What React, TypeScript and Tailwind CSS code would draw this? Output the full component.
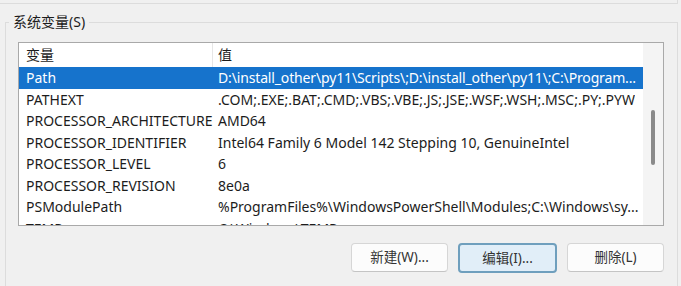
const rows: { name: string; value: string; selected?: boolean }[] = [
  {
    name: 'Path',
    value: 'D:\\install_other\\py11\\Scripts\\;D:\\install_other\\py11\\;C:\\Program...',
    selected: true,
  },
  { name: 'PATHEXT', value: '.COM;.EXE;.BAT;.CMD;.VBS;.VBE;.JS;.JSE;.WSF;.WSH;.MSC;.PY;.PYW' },
  { name: 'PROCESSOR_ARCHITECTURE', value: 'AMD64' },
  { name: 'PROCESSOR_IDENTIFIER', value: 'Intel64 Family 6 Model 142 Stepping 10, GenuineIntel' },
  { name: 'PROCESSOR_LEVEL', value: '6' },
  { name: 'PROCESSOR_REVISION', value: '8e0a' },
  { name: 'PSModulePath', value: '%ProgramFiles%\\WindowsPowerShell\\Modules;C:\\Windows\\sy...' },
  { name: 'TEMP', value: 'C:\\Windows\\TEMP' },
];

const font = { fontFamily: '"Noto Sans", "Noto Sans CJK SC", sans-serif' };

function Button({ label, focused }: { label: string; focused?: boolean }) {
  return (
    <button
      className={
        focused
          ? 'flex h-[30px] w-[99px] items-center justify-center rounded-[4px] border-2 border-[#6f9fbd] bg-[#e1eef8] text-[13.5px] text-[#333]'
          : 'flex h-[29px] w-[97px] items-center justify-center rounded-[4px] border border-[#d6d6d6] border-b-[#c4c4c4] bg-[#fcfcfc] text-[13.5px] text-[#333]'
      }
    >
      {label}
    </button>
  );
}

export default function App() {
  return (
    <div className="h-[286px] w-[681px] overflow-hidden bg-[#f0f0f0] text-[#1c1c1c]" style={font}>
      {/* bottom edge of the group above */}
      <div className="mr-[3px] h-[4px] border-b border-r border-[#dcdcdc]" />

      {/* System variables group */}
      <div className="relative ml-[5px] mr-[3px] mt-[18px] h-[300px] border-l border-r border-t border-[#dcdcdc]">
        <span className="absolute left-[3px] top-[-11px] bg-[#f0f0f0] px-[4px] text-[14px] leading-[20px]">
          系统变量(S)
        </span>

        <div className="ml-[12px] mt-[19px] flex h-[184px] w-[646px] border border-[#a9a9a9] bg-white">
          <div className="flex-1 overflow-hidden">
            <div className="flex h-[24px] items-end text-[14px]">
              <div className="w-[194px] border-r border-[#e6e6e6] pl-[7px] leading-[24px]">变量</div>
              <div className="pl-[5px] leading-[24px]">值</div>
            </div>
            {rows.map((r) => (
              <div
                key={r.name}
                className={
                  r.selected
                    ? 'flex h-[21.5px] items-center bg-[#1673cc] text-[14px] text-white'
                    : 'flex h-[21.5px] items-center text-[14px]'
                }
              >
                <div className="w-[194px] shrink-0 whitespace-nowrap pl-[7px]">{r.name}</div>
                <div
                  className={
                    r.selected
                      ? 'overflow-hidden whitespace-nowrap pl-[5px] tracking-[-0.15px]'
                      : 'overflow-hidden whitespace-nowrap pl-[5px]'
                  }
                >
                  {r.value}
                </div>
              </div>
            ))}
          </div>
          {/* scrollbar */}
          <div className="w-[20px] bg-[#f4f4f4] pl-[8px] pt-[67px]">
            <div className="h-[55px] w-[4px] rounded-full bg-[#8a8a8a]" />
          </div>
        </div>

        <div className="mr-[13px] mt-[17px] flex justify-end gap-[10px]">
          <Button label="新建(W)..." />
          <Button label="编辑(I)..." focused />
          <Button label="删除(L)" />
        </div>
      </div>
    </div>
  );
}
